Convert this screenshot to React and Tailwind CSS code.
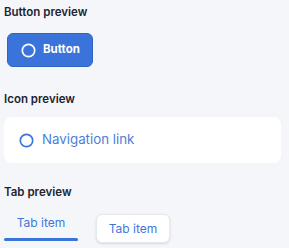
import React from 'react';

function RingIcon({ className }) {
  return (
    <svg width="15" height="15" viewBox="0 0 16 16" fill="none" stroke="currentColor" strokeWidth="1.8" className={className}>
      <circle cx="8" cy="8" r="6.6" />
    </svg>
  );
}

export default function App() {
  return (
    <div className="min-h-screen w-[289px] h-[248px] bg-[#f5f6fa] px-[4px] pt-[5px] overflow-hidden" style={{ fontFamily: 'Inter, "Liberation Sans", sans-serif' }}>
      {/* Button */}
      <h2 className="h-[14px] leading-[14px] text-[11.5px] font-semibold text-[#1f2330]">Button preview</h2>
      <div className="mt-[14px] ml-[3px]">
        <button className="w-[86px] h-[34px] rounded-[6px] bg-[#3a74da] border border-[#2f63c4] flex items-center gap-[7px] pl-[13px] text-white text-[11.5px] font-bold">
          <RingIcon className="text-white" />
          Button
        </button>
      </div>

      {/* Icon */}
      <h2 className="mt-[25px] h-[14px] leading-[14px] text-[11.5px] font-semibold text-[#1f2330]">Icon preview</h2>
      <div className="mt-[11px] w-[277px] h-[46px] bg-white rounded-[8px] flex items-center gap-[8px] pl-[15px] pr-4">
        <RingIcon className="text-[#3b74db]" />
        <span className="text-[13.3px] text-[#4a80d9]">Navigation link</span>
      </div>

      {/* Tabs */}
      <h2 className="mt-[22px] h-[14px] leading-[14px] text-[11.5px] font-semibold text-[#1f2330]">Tab preview</h2>
      <div className="mt-[15px] flex items-start gap-[18px]">
        <div className="w-[74px] h-[27px] flex flex-col">
          <span className="pt-[1px] leading-[16px] text-[12px] text-center text-[#3f78d8]">Tab item</span>
          <div className="mt-auto h-[3px] rounded-full bg-[#3a74da]" />
        </div>
        <div className="w-[74px] h-[29px] bg-white rounded-[6px] border border-[#e6e8ee] shadow-sm flex items-center justify-center text-[12px] text-[#3f78d8]">
          Tab item
        </div>
      </div>
    </div>
  );
}
